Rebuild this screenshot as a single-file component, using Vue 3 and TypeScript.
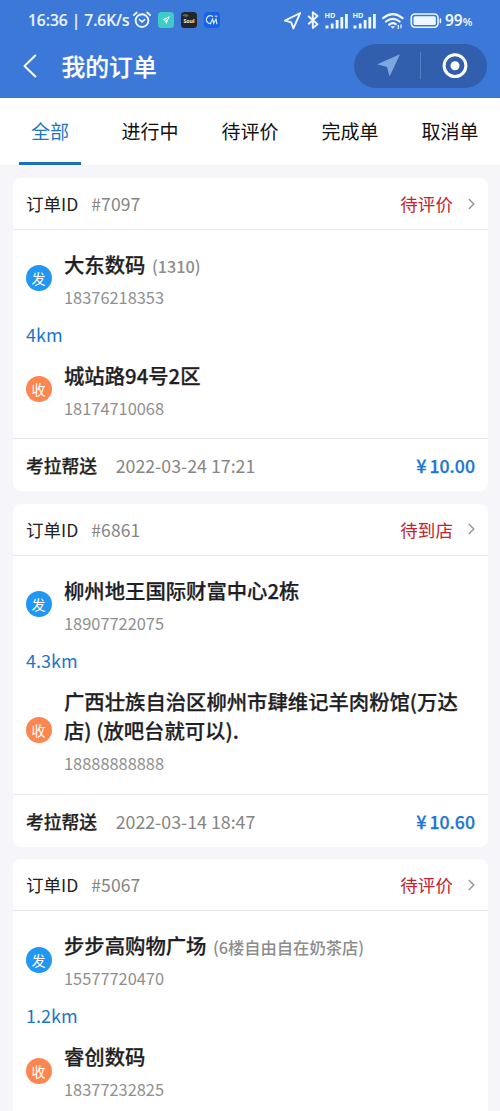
<script setup lang="ts">
interface Stop {
  name: string
  note?: string
  phone: string
}

interface Order {
  id: number
  status: string
  from: Stop
  to: Stop
  distance: string
  time?: string
  price?: string
}

const tabs: string[] = ['全部', '进行中', '待评价', '完成单', '取消单']
const activeTab = '全部'

const orders: Order[] = [
  {
    id: 7097,
    status: '待评价',
    from: { name: '大东数码', note: '(1310)', phone: '18376218353' },
    to: { name: '城站路94号2区', phone: '18174710068' },
    distance: '4km',
    time: '2022-03-24 17:21',
    price: '10.00',
  },
  {
    id: 6861,
    status: '待到店',
    from: { name: '柳州地王国际财富中心2栋', phone: '18907722075' },
    to: { name: '广西壮族自治区柳州市肆维记羊肉粉馆(万达店) (放吧台就可以).', phone: '18888888888' },
    distance: '4.3km',
    time: '2022-03-14 18:47',
    price: '10.60',
  },
  {
    id: 5067,
    status: '待评价',
    from: { name: '步步高购物广场', note: '(6楼自由自在奶茶店)', phone: '15577720470' },
    to: { name: '睿创数码', phone: '18377232825' },
    distance: '1.2km',
  },
]
</script>

<template>
  <div class="screen">
    <header class="top">
      <div class="status-bar">
        <span class="clock">16:36 | 7.6K/s</span>
        <svg class="alarm" width="20" height="18" viewBox="0 0 20 18" fill="none" stroke="#eef6ff" stroke-linecap="round">
          <circle cx="10" cy="9.6" r="6.4" stroke-width="1.9" />
          <path d="M7.5 8.7 10 10.9l2.7-2.2" stroke-width="1.6" />
          <path d="M1.8 4.2 4.8 1.5M18.2 4.2l-3-2.7" stroke-width="1.8" />
        </svg>
        <svg class="app-a" width="16" height="16" viewBox="0 0 16 16">
          <rect width="16" height="16" rx="3.5" fill="#3fcbc6" />
          <path d="M12 4 4.2 7.5l2.6 1.2L8.2 12z" fill="#e9ffff" />
          <path d="M6.8 8.8 10 6" stroke="#3fcbc6" stroke-width="1" />
        </svg>
        <svg class="app-b" width="16" height="16" viewBox="0 0 16 16">
          <rect width="16" height="16" rx="3.5" fill="#22262b" />
          <path d="M1 3.5Q5 .5 8 4l-3 1z" fill="#695f59" />
          <text x="2.5" y="10.6" font-size="5.6" font-weight="700" fill="#f2f2ee" textLength="11" lengthAdjust="spacingAndGlyphs">Soul</text>
        </svg>
        <svg class="app-c" width="16" height="16" viewBox="0 0 16 16" fill="none" stroke="#d9edff" stroke-linecap="round">
          <rect width="16" height="16" rx="3.5" fill="#1762e6" stroke="none" />
          <path d="M8.5 4.2A4 4 0 1 0 6.5 11.6" stroke-width="1.2" />
          <path d="M6.5 11.6 8.6 7l1 4.4L12 7l.8 4.6" stroke-width="1.2" />
          <path d="M11 4.2h2" stroke-width="1" />
        </svg>
        <svg class="signals" width="160" height="20" viewBox="0 0 160 20" fill="none" stroke="#eef6ff">
          <path d="M16.2 3 1 10.7l6.2 1.7 2.2 6z" stroke-width="1.9" stroke-linejoin="round" />
          <path d="m24.2 6 9.3 8.2-4.7 3.8V2.3l4.7 3.7-9.3 8.2" stroke-width="1.9" stroke-linejoin="round" />
          <g fill="#eef6ff" stroke="none">
            <text x="40.5" y="7.9" font-size="7.2" font-weight="700" textLength="11" lengthAdjust="spacingAndGlyphs">HD</text>
            <path d="M41.5 15.5h3v3h-3zM46.8 13.4h2.8v5.1h-2.8zM51.7 10h2.8v8.5h-2.8zM56.4 7h2.8v11.5h-2.8zM61 4h2.8v14.5h-2.8z" />
            <text x="68.5" y="7.9" font-size="7.2" font-weight="700" textLength="11" lengthAdjust="spacingAndGlyphs">HD</text>
            <path d="M69.5 15.5h3v3h-3zM74.8 13.4h2.8v5.1h-2.8zM79.7 10h2.8v8.5h-2.8zM84.4 7h2.8v11.5h-2.8zM89 4h2.8v14.5h-2.8z" />
          </g>
          <path d="M99 8.1q9.8-8 19.6 0M102 11.5q6.8-5.4 13.6 0M105.2 14.6q3.6-2.7 6.5-.4" stroke-width="2.2" stroke-linecap="round" />
          <path d="m106.3 16.3 2.5 2.5 2.3-2.5z" fill="#eef6ff" stroke="none" />
          <path d="M114.3 15v4M117 14.4v3.8" stroke-width="1.3" />
          <rect x="127.3" y="4" width="26.7" height="13.2" rx="3.6" stroke-width="1.6" />
          <rect x="129.5" y="6.2" width="22.3" height="8.8" rx="1.5" fill="#eef6ff" stroke="none" />
          <path d="M156.4 9v3.6" stroke-width="1.6" stroke-linecap="round" />
        </svg>
        <span class="battery">99<small>%</small></span>
      </div>
      <div class="nav">
        <svg class="back" width="14" height="24" viewBox="0 0 14 24" fill="none" stroke="#fff" stroke-width="2" stroke-linecap="round" stroke-linejoin="round">
          <path d="M12.3 1.5 1.5 12l10.8 10.5" />
        </svg>
        <h1 class="title">我的订单</h1>
        <div class="capsule">
          <svg width="133" height="44" viewBox="0 0 133 44">
            <path d="M46 10.3 23.3 20.2l9.7 2.8 2.6 9.4z" fill="#7ea7e0" />
            <path d="M66.5 8v27" stroke="#5580c3" stroke-width="1" />
            <circle cx="101" cy="21.7" r="10.9" fill="none" stroke="#fff" stroke-width="3" />
            <circle cx="101" cy="21.7" r="4.5" fill="#fff" />
          </svg>
        </div>
      </div>
    </header>

    <nav class="tabs">
      <div v-for="tab in tabs" :key="tab" class="tab" :class="{ active: tab === activeTab }">{{ tab }}</div>
    </nav>

    <main class="list">
      <section v-for="order in orders" :key="order.id" class="card">
        <div class="card-head">
          <span>订单ID</span>
          <span class="order-id">#{{ order.id }}</span>
          <span class="state">{{ order.status }}</span>
          <svg class="chevron" width="8" height="12" viewBox="0 0 8 12" fill="none" stroke="#959595" stroke-width="1.4">
            <path d="m1.8 1 5 5-5 5" />
          </svg>
        </div>
        <div class="card-body">
          <div class="stop">
            <span class="badge send">发</span>
            <div class="info">
              <div class="name">{{ order.from.name }}<span v-if="order.from.note" class="note">{{ order.from.note }}</span></div>
              <div class="phone">{{ order.from.phone }}</div>
            </div>
          </div>
          <div class="distance">{{ order.distance }}</div>
          <div class="stop">
            <span class="badge receive">收</span>
            <div class="info">
              <div class="name">{{ order.to.name }}</div>
              <div class="phone">{{ order.to.phone }}</div>
            </div>
          </div>
        </div>
        <div v-if="order.price" class="card-foot">
          <span class="service">考拉帮送</span>
          <span class="time">{{ order.time }}</span>
          <span class="price"><span class="yen">¥</span>{{ order.price }}</span>
        </div>
      </section>
    </main>
  </div>
</template>

<style>
body {
  margin: 0;
  overflow: hidden;
}
</style>

<style scoped>
.screen {
  width: 500px;
  height: 1111px;
  overflow: hidden;
  background: #f6f6fa;
  color: #222;
  font-family: "Noto Sans CJK SC", sans-serif;
}
.top {
  height: 98px;
  background: #3c78d8;
  color: #fff;
}
.status-bar {
  display: flex;
  align-items: center;
  height: 40px;
  padding-left: 28px;
  box-sizing: border-box;
  font-family: "Noto Sans", sans-serif;
  font-weight: 500;
  font-size: 15.5px;
  color: #eef6ff;
}
.clock {
  width: 104px;
  white-space: nowrap;
  -webkit-text-stroke: 0.2px #eef6ff;
}
.app-a {
  margin-left: 6px;
}
.app-b,
.app-c {
  margin-left: 7px;
}
.signals {
  margin-left: 64px;
  flex: none;
}
.battery {
  margin-left: 1px;
  font-size: 15.5px;
  font-weight: 600;
  white-space: nowrap;
}
.battery small {
  font-size: 11px;
}
.nav {
  display: flex;
  align-items: center;
  height: 51px;
  padding: 0 13px 0 23px;
}
.title {
  margin: 0 0 0 24.5px;
  font-size: 23.8px;
  line-height: 34px;
  font-weight: 500;
  -webkit-text-stroke: 0.2px #fff;
}
.capsule {
  width: 133px;
  height: 44px;
  margin-left: auto;
  border-radius: 22px;
  background: #315fad;
}
.capsule svg {
  display: block;
}
.tabs {
  display: flex;
  height: 67px;
  background: #fff;
}
.tab {
  display: flex;
  flex: none;
  justify-content: center;
  width: 62px;
  height: 67px;
  margin: 0 19px;
  box-sizing: border-box;
  font-size: 19px;
  line-height: 66px;
  white-space: nowrap;
  color: #111;
}
.tab.active {
  color: #1b76c8;
  border-bottom: 3px solid #1b70b8;
}
.list {
  display: flex;
  flex-direction: column;
  gap: 12.5px;
  padding: 13px 12px 0 13px;
}
.card {
  flex: none;
  border-radius: 8px;
  background: #fff;
}
.card-head,
.card-foot {
  display: flex;
  align-items: center;
  height: 51px;
  padding: 0 13px;
  font-size: 17.5px;
}
.card-head {
  border-bottom: 1px solid #e8e8ea;
}
.card-foot {
  height: 52px;
  border-top: 1px solid #e8e8ea;
}
.order-id {
  margin-left: 13px;
  letter-spacing: 0.15px;
  color: #858585;
}
.state {
  margin-left: auto;
  letter-spacing: 0.1px;
  color: #c4222d;
}
.chevron {
  margin-left: 14px;
}
.card-body {
  padding: 20px 13px 20.7px;
}
.stop {
  display: flex;
  align-items: center;
}
.badge {
  flex: none;
  width: 26px;
  height: 26px;
  margin: 0 0.5px 0 -0.5px;
  border-radius: 50%;
  color: #fff;
  font-size: 14px;
  line-height: 26px;
  text-align: center;
}
.send {
  background: #2196f3;
}
.receive {
  background: #fb8650;
}
.info {
  flex: 1;
  margin-left: 12px;
}
.name {
  font-size: 20.35px;
  line-height: 29.8px;
  font-weight: 500;
  color: #1e1e24;
  -webkit-text-stroke: 0.25px #1e1e24;
}
.note {
  margin-left: 6.5px;
  font-size: 16.3px;
  line-height: 1;
  color: #8c8c8c;
  -webkit-text-stroke: 0;
}
.phone {
  margin-top: 7px;
  font-size: 16.4px;
  line-height: 20px;
  color: #8f8f8f;
}
.distance {
  padding: 14px 0;
  font-size: 18px;
  line-height: 26px;
  color: #1b76c8;
}
.service {
  font-size: 17.8px;
  font-weight: 500;
  -webkit-text-stroke: 0.25px #222;
}
.time {
  margin-left: 18.5px;
  font-size: 17.8px;
  color: #858585;
}
.price {
  margin-left: auto;
  font-size: 17.7px;
  font-weight: 500;
  color: #1b76d2;
  -webkit-text-stroke: 0.25px #1b76d2;
}
.yen {
  display: inline-block;
  margin-right: 3px;
  font-size: 18px;
  line-height: 1;
}
</style>
